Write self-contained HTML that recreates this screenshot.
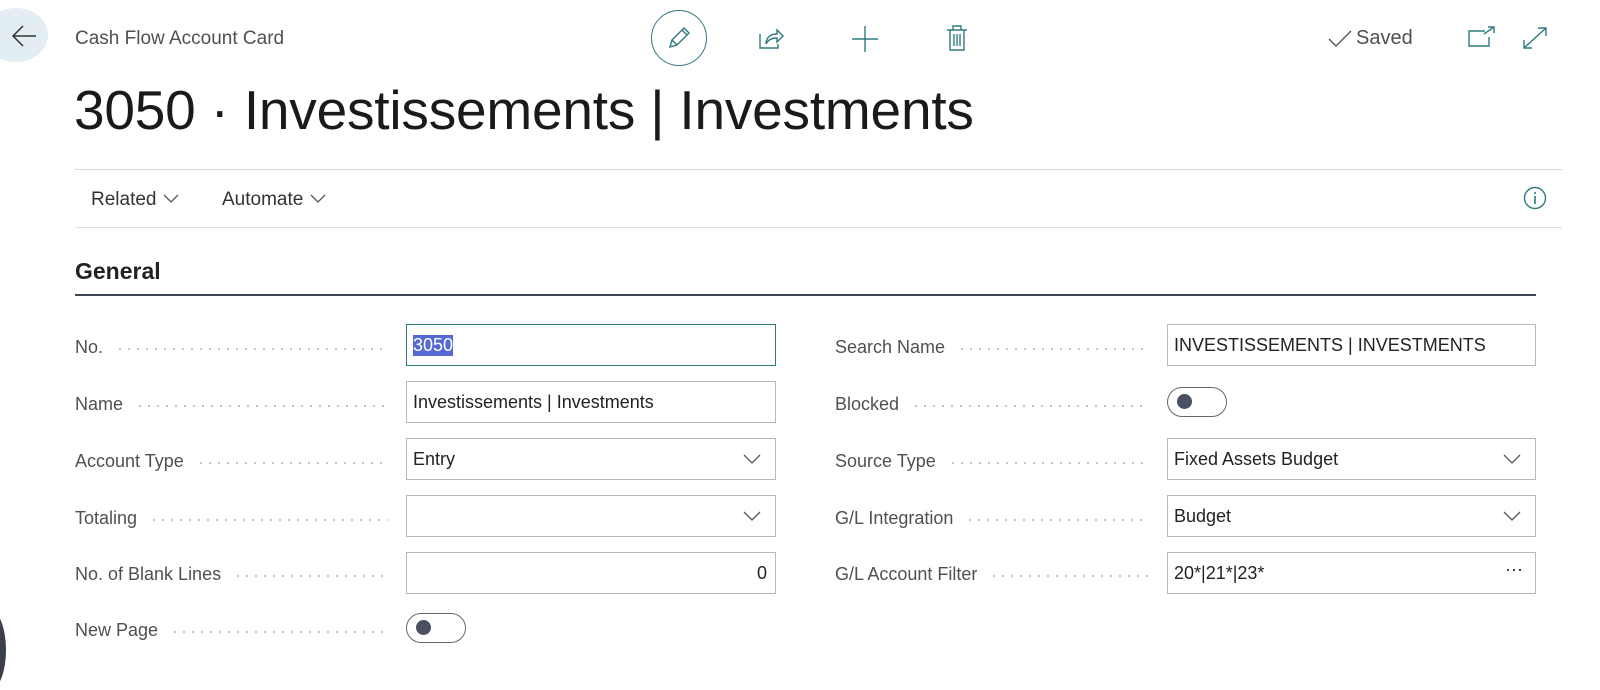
<!DOCTYPE html>
<html><head><style>
body{margin:0;width:1600px;height:660px;overflow:hidden;background:#fff;font-family:"Liberation Sans",sans-serif;color:#212121;position:relative}
.a{position:absolute}
.lbl{position:absolute;font-size:18px;color:#505050;display:flex;align-items:center;height:42px}
.lbl .d{flex:1;margin:0 18px 0 16px;height:2px;margin-top:4px;background:repeating-linear-gradient(90deg,#c4c4c4 0 2px,transparent 2px 9px)}
.inp{position:absolute;height:42px;border:1px solid #b8b8b8;box-sizing:border-box;font-size:18px;color:#222;display:flex;align-items:center;padding:0 6px}
.chev{position:absolute;right:14px;top:14px}
.tog{position:absolute;width:60px;height:30px;border:1.5px solid #666;border-radius:15px;box-sizing:border-box}
.tog:after{content:"";position:absolute;left:9px;top:6px;width:15px;height:15px;border-radius:50%;background:#4a5060}
</style></head><body>
<div class="a" style="left:-16px;top:8px;width:64px;height:54px;border-radius:50%;background:#e2eef1"></div>
<svg class="a" style="left:10px;top:22px" width="28" height="28" viewBox="0 0 28 28"><path d="M26 14H3M13 4L3 14l10 10" stroke="#333" stroke-width="1.5" fill="none"/></svg>
<div class="a" style="left:75px;top:28px;font-size:19px;color:#505050">Cash Flow Account Card</div>
<div class="a" style="left:651px;top:10px;width:56px;height:56px;border:1.2px solid #2f7a80;border-radius:50%;box-sizing:border-box"></div>
<svg class="a" style="left:666px;top:25px" width="26" height="26" viewBox="0 0 26 26"><path d="M4 22l2-7L18 3l5 5L11 20zM6 15l5 5M16 5l5 5" stroke="#2f7a80" stroke-width="1.4" fill="none"/></svg>
<svg class="a" style="left:758px;top:26px" width="26" height="24" viewBox="0 0 26 24"><path d="M2 8v14h18v-4M8 18c0-7 5-10 11-10V4l6 6-6 6v-4c-5 0-9 2-11 6z" stroke="#2f7a80" stroke-width="1.4" fill="none"/></svg>
<svg class="a" style="left:852px;top:26px" width="26" height="26"><path d="M13 0v26M0 13h26" stroke="#2f7a80" stroke-width="1.4"/></svg>
<svg class="a" style="left:946px;top:25px" width="22" height="26" viewBox="0 0 22 26"><path d="M1 5h20M7 5V1h8v4M4 5v20h14V5M8 9v12M11 9v12M14 9v12" stroke="#2f7a80" stroke-width="1.4" fill="none"/></svg>
<svg class="a" style="left:1328px;top:30px" width="24" height="18"><path d="M1 9l7 7L23 1" stroke="#555" stroke-width="1.4" fill="none"/></svg>
<div class="a" style="left:1356px;top:27px;font-size:20px;color:#505050">Saved</div>
<svg class="a" style="left:1468px;top:26px" width="28" height="22"><path d="M17 5H1v15h20v-9M16 8l10-7M20 1h6v6" stroke="#2f7a80" stroke-width="1.4" fill="none"/></svg>
<svg class="a" style="left:1522px;top:26px" width="26" height="24"><path d="M2 22L24 2M2 14v8h8M16 2h8v8" stroke="#2f7a80" stroke-width="1.4" fill="none"/></svg>
<div class="a" style="left:74px;top:78px;font-size:55px;color:#1a1a1a;letter-spacing:-0.2px">3050 · Investissements | Investments</div>
<div class="a" style="left:75px;top:169px;width:1487px;height:1px;background:#d8d8d8"></div>
<div class="a" style="left:91px;top:189px;font-size:19px;color:#333">Related <svg width="18" height="12"><path d="M2 2l7 7 7-7" stroke="#555" fill="none" stroke-width="1.3"/></svg></div>
<div class="a" style="left:222px;top:189px;font-size:19px;color:#333">Automate <svg width="18" height="12"><path d="M2 2l7 7 7-7" stroke="#555" fill="none" stroke-width="1.3"/></svg></div>
<svg class="a" style="left:1523px;top:186px" width="24" height="24"><circle cx="12" cy="12" r="10.5" stroke="#2f7a80" stroke-width="1.4" fill="none"/><path d="M12 10v8M12 6v2" stroke="#2f7a80" stroke-width="1.6"/></svg>
<div class="a" style="left:75px;top:227px;width:1487px;height:1px;background:#e0e0e0"></div>
<div class="a" style="left:75px;top:258px;font-size:23px;font-weight:bold;color:#222">General</div>
<div class="a" style="left:75px;top:294px;width:1461px;height:2px;background:#3d4254"></div>

<div class="lbl" style="left:75px;top:326px;width:331px">No.<span class="d"></span></div>
<div class="inp" style="left:406px;top:324px;width:370px;border-color:#2f7a80"><span style="background:#5468d6;color:#fff">3050</span></div>
<div class="lbl" style="left:75px;top:383px;width:331px">Name<span class="d"></span></div>
<div class="inp" style="left:406px;top:381px;width:370px">Investissements | Investments</div>
<div class="lbl" style="left:75px;top:440px;width:331px">Account Type<span class="d"></span></div>
<div class="inp" style="left:406px;top:438px;width:370px">Entry<svg class="chev" width="18" height="12"><path d="M1 2l8 8 8-8" stroke="#555" fill="none" stroke-width="1.3"/></svg></div>
<div class="lbl" style="left:75px;top:497px;width:331px">Totaling<span class="d"></span></div>
<div class="inp" style="left:406px;top:495px;width:370px"><svg class="chev" width="18" height="12"><path d="M1 2l8 8 8-8" stroke="#555" fill="none" stroke-width="1.3"/></svg></div>
<div class="lbl" style="left:75px;top:553px;width:331px">No. of Blank Lines<span class="d"></span></div>
<div class="inp" style="left:406px;top:552px;width:370px;justify-content:flex-end;padding-right:8px">0</div>
<div class="lbl" style="left:75px;top:609px;width:331px">New Page<span class="d"></span></div>
<div class="tog" style="left:406px;top:613px"></div>

<div class="lbl" style="left:835px;top:326px;width:332px">Search Name<span class="d"></span></div>
<div class="inp" style="left:1167px;top:324px;width:369px">INVESTISSEMENTS | INVESTMENTS</div>
<div class="lbl" style="left:835px;top:383px;width:332px">Blocked<span class="d"></span></div>
<div class="tog" style="left:1167px;top:387px"></div>
<div class="lbl" style="left:835px;top:440px;width:332px">Source Type<span class="d"></span></div>
<div class="inp" style="left:1167px;top:438px;width:369px">Fixed Assets Budget<svg class="chev" width="18" height="12"><path d="M1 2l8 8 8-8" stroke="#555" fill="none" stroke-width="1.3"/></svg></div>
<div class="lbl" style="left:835px;top:497px;width:332px">G/L Integration<span class="d"></span></div>
<div class="inp" style="left:1167px;top:495px;width:369px">Budget<svg class="chev" width="18" height="12"><path d="M1 2l8 8 8-8" stroke="#555" fill="none" stroke-width="1.3"/></svg></div>
<div class="lbl" style="left:835px;top:553px;width:332px">G/L Account Filter<span class="d"></span></div>
<div class="inp" style="left:1167px;top:552px;width:369px">20*|21*|23*<span style="position:absolute;right:12px;top:6px">···</span></div>
<div class="a" style="left:-26px;top:610px;width:32px;height:80px;border-radius:50%;background:#3a3f4a"></div>
</body></html>
